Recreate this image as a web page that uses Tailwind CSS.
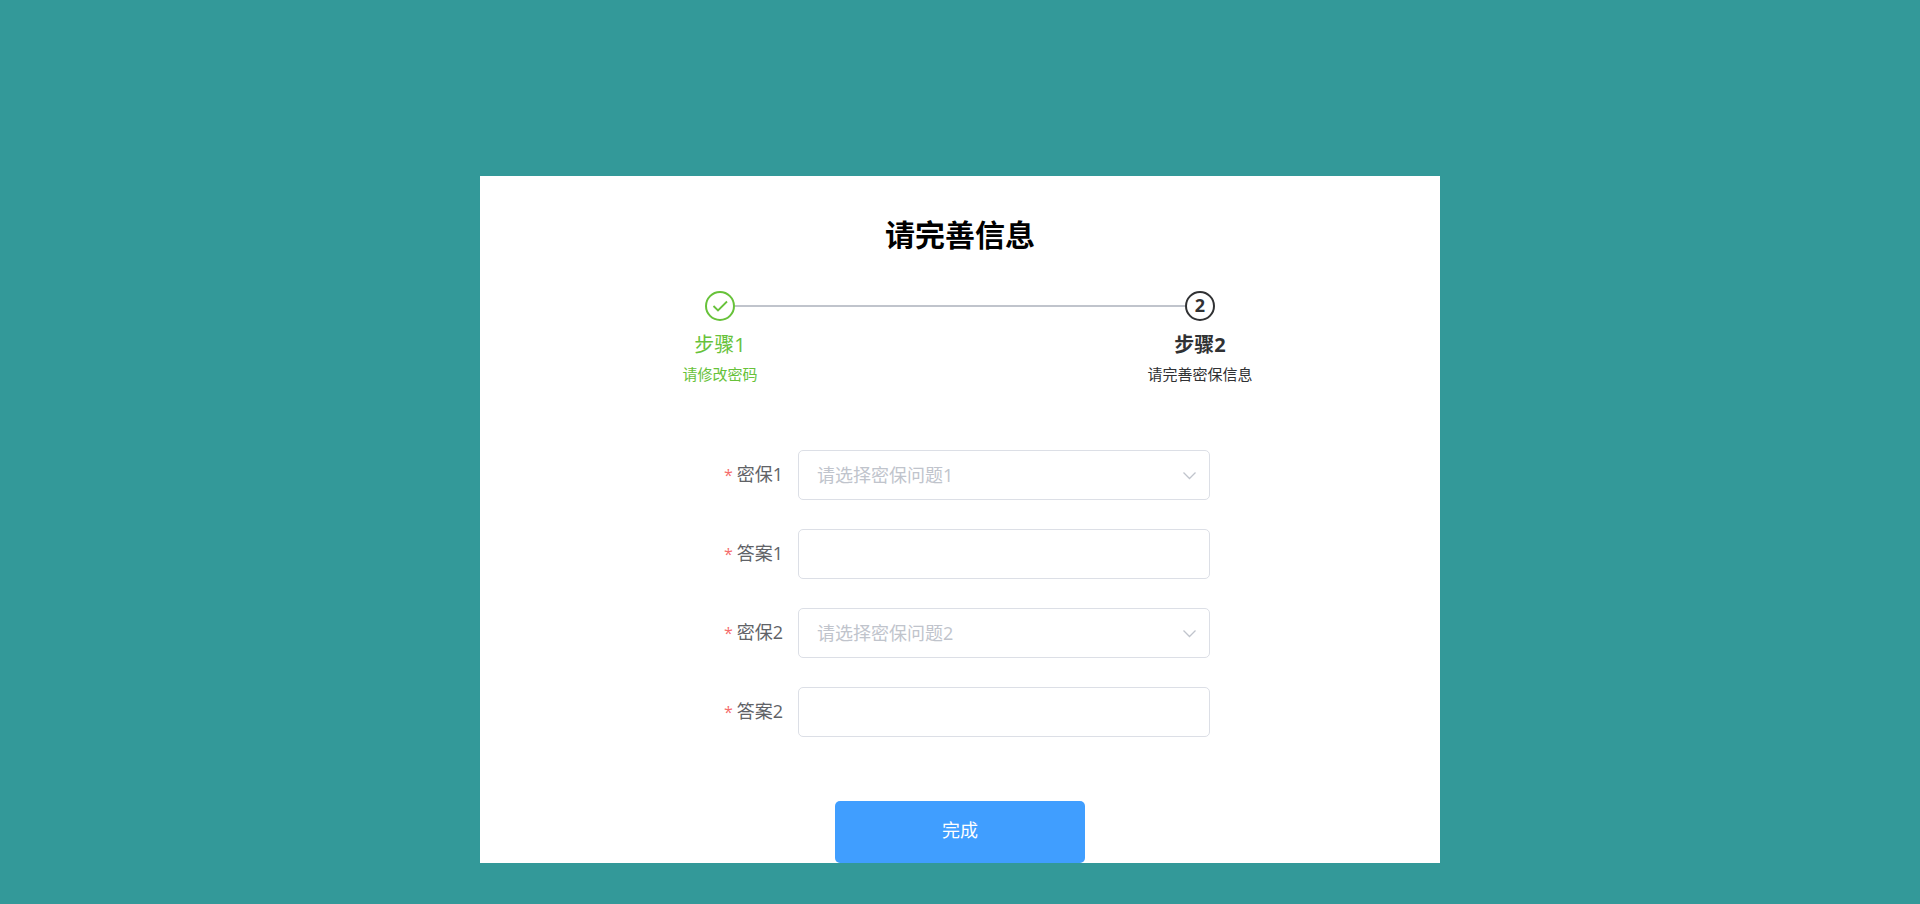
<!DOCTYPE html>
<html lang="zh-CN">
<head>
<meta charset="utf-8">
<meta name="viewport" content="width=device-width, initial-scale=1">
<title>请完善信息</title>
<script src="https://cdn.jsdelivr.net/npm/@tailwindcss/browser@4"></script>
</head>
<body class="min-h-screen bg-[#339999] pt-44 font-['Open_Sans','Noto_Sans_CJK_SC',sans-serif] text-lg text-[#606266]">
<main class="mx-auto w-1/2 min-w-[600px] bg-white pt-9">
  <h1 class="text-center text-[30px] leading-[46px] font-bold text-black">请完善信息</h1>

  <ol class="mt-[33px] grid grid-cols-2 text-center">
    <li class="text-[#67c23a]">
      <div class="flex items-center">
        <span class="flex-1"></span>
        <span class="flex size-[30px] items-center justify-center rounded-full border-2 border-[#67c23a]">
          <svg class="size-4" viewBox="0 0 16 16" fill="none" stroke="currentColor" stroke-width="1.8" aria-hidden="true"><path d="M1.5 8 6 12.5 15 3.5"/></svg>
        </span>
        <span class="h-0.5 flex-1 bg-[#c0c4cc]"></span>
      </div>
      <h2 class="pt-1 text-xl leading-[39px]">步骤1</h2>
      <p class="text-[15px] leading-5">请修改密码</p>
    </li>
    <li class="text-[#303133]">
      <div class="flex items-center">
        <span class="h-0.5 flex-1 bg-[#c0c4cc]"></span>
        <span class="flex size-[30px] items-center justify-center rounded-full border-2 border-[#303133] pb-0.5 text-lg leading-none font-bold">2</span>
        <span class="flex-1"></span>
      </div>
      <h2 class="pt-1 text-xl leading-[39px] font-bold">步骤2</h2>
      <p class="text-[15px] leading-5">请完善密保信息</p>
    </li>
  </ol>

  <form class="mx-auto mt-[66px] w-[500px]">
    <div class="grid gap-y-[29px]">
      <div class="flex items-center">
        <label for="question1" class="w-[88px] pr-[15px] pb-0.5 text-right whitespace-nowrap"><span class="mr-1 text-base text-[#f56c6c]">*</span>密保1</label>
        <div class="relative flex-1">
          <select id="question1" required class="block h-[50px] w-full appearance-none rounded-[5px] border border-[#dcdfe6] bg-white px-[18px] text-[#c0c4cc]">
            <option value="">请选择密保问题1</option>
          </select>
          <svg class="pointer-events-none absolute inset-y-0 right-3 my-auto h-4 w-4" viewBox="0 0 16 16" fill="none" stroke="#c0c4cc" stroke-width="1.25" aria-hidden="true"><path d="M1.5 5.5 7.5 11.5 13.5 5.5"/></svg>
        </div>
      </div>
      <div class="flex items-center">
        <label for="answer1" class="w-[88px] pr-[15px] pb-0.5 text-right whitespace-nowrap"><span class="mr-1 text-base text-[#f56c6c]">*</span>答案1</label>
        <input id="answer1" type="text" required class="h-[50px] min-w-0 flex-1 rounded-[5px] border border-[#dcdfe6] bg-white px-[18px]">
      </div>
      <div class="flex items-center">
        <label for="question2" class="w-[88px] pr-[15px] pb-0.5 text-right whitespace-nowrap"><span class="mr-1 text-base text-[#f56c6c]">*</span>密保2</label>
        <div class="relative flex-1">
          <select id="question2" required class="block h-[50px] w-full appearance-none rounded-[5px] border border-[#dcdfe6] bg-white px-[18px] text-[#c0c4cc]">
            <option value="">请选择密保问题2</option>
          </select>
          <svg class="pointer-events-none absolute inset-y-0 right-3 my-auto h-4 w-4" viewBox="0 0 16 16" fill="none" stroke="#c0c4cc" stroke-width="1.25" aria-hidden="true"><path d="M1.5 5.5 7.5 11.5 13.5 5.5"/></svg>
        </div>
      </div>
      <div class="flex items-center">
        <label for="answer2" class="w-[88px] pr-[15px] pb-0.5 text-right whitespace-nowrap"><span class="mr-1 text-base text-[#f56c6c]">*</span>答案2</label>
        <input id="answer2" type="text" required class="h-[50px] min-w-0 flex-1 rounded-[5px] border border-[#dcdfe6] bg-white px-[18px]">
      </div>
    </div>
    <button type="submit" class="mx-auto mt-16 block h-[62px] w-[250px] rounded-[5px] bg-[#409eff] pb-1 text-white">完成</button>
  </form>
</main>
</body>
</html>
